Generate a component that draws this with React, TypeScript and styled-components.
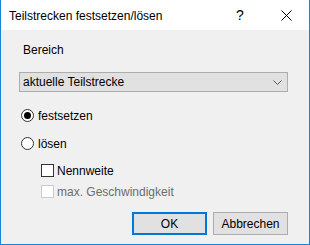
import React, { useState } from 'react';
import styled, { createGlobalStyle } from 'styled-components';

const GlobalStyle = createGlobalStyle`
  html, body {
    margin: 0;
    padding: 0;
    background: #ffffff;
  }
  body {
    font-family: 'Liberation Sans', Arial, sans-serif;
    font-size: 12px;
  }
`;

// DIALOG
const App: React.FC = () => {
  const [mode, setMode] = useState<'set' | 'release'>('set');
  const [diameter, setDiameter] = useState<boolean>(false);

  return (
    <>
      <GlobalStyle />
      <Window>
        <TitleBar>
          <Title>Teilstrecken festsetzen/lösen</Title>
          <HelpButton>?</HelpButton>
          <CloseButton>
            <svg width='11' height='11' viewBox='0 0 11 11'>
              <path d='M0.5 0.5 L10.5 10.5 M10.5 0.5 L0.5 10.5' stroke='#000' strokeWidth='1' />
            </svg>
          </CloseButton>
        </TitleBar>
        <Body>
          <Label>Bereich</Label>
          <Combo>
            <span>aktuelle Teilstrecke</span>
            <svg width='9' height='5' viewBox='0 0 9 5'>
              <path d='M0.5 0.5 L4.5 4.5 L8.5 0.5' stroke='#5a5a5a' strokeWidth='1' fill='none' />
            </svg>
          </Combo>
          <RadioRow $first onClick={() => setMode('set')}>
            <RadioCircle $checked={mode === 'set'} />
            <span>festsetzen</span>
          </RadioRow>
          <RadioRow onClick={() => setMode('release')}>
            <RadioCircle $checked={mode === 'release'} />
            <span>lösen</span>
          </RadioRow>
          <CheckRow $first onClick={() => setDiameter(!diameter)}>
            <CheckBox $checked={diameter}>{diameter ? '✓' : ''}</CheckBox>
            <span>Nennweite</span>
          </CheckRow>
          <CheckRow $disabled>
            <CheckBox $disabled />
            <span>max. Geschwindigkeit</span>
          </CheckRow>
          <ButtonRow>
            <DialogButton $default>OK</DialogButton>
            <DialogButton>Abbrechen</DialogButton>
          </ButtonRow>
        </Body>
      </Window>
    </>
  );
};

// STYLED COMPONENTS
const Window = styled.div`
  width: 310px;
  height: 245px;
  box-sizing: border-box;
  border: 1px solid #1883d7;
  border-top: none;
  display: flex;
  flex-direction: column;
  background: #f0f0f0;
  color: #000000;
`;

const TitleBar = styled.div`
  height: 30px;
  background: #ffffff;
  display: flex;
  align-items: center;
  padding-left: 8px;
`;

const Title = styled.div`
  flex: 1;
  font-size: 12px;
  padding-top: 1px;
`;

const HelpButton = styled.div`
  width: 46px;
  text-align: center;
  font-size: 14px;
`;

const CloseButton = styled.div`
  width: 46px;
  height: 30px;
  display: flex;
  align-items: center;
  justify-content: center;
  padding-top: 1px;
  box-sizing: border-box;
`;

const Body = styled.div`
  flex: 1;
  display: flex;
  flex-direction: column;
  padding: 13px 21px 0 18px;
`;

const Label = styled.div`
  line-height: 15px;
  padding-left: 4px;
  margin-bottom: 14px;
`;

const Combo = styled.div`
  height: 20px;
  box-sizing: border-box;
  border: 1px solid #adadad;
  background: #e1e1e1;
  display: flex;
  align-items: center;
  justify-content: space-between;
  padding: 0 5px 0 3px;
`;

const RadioRow = styled.div<{ $first?: boolean }>`
  display: flex;
  align-items: center;
  gap: 4px;
  height: 17px;
  margin-top: ${(p) => (p.$first ? '15px' : '11px')};
  padding-left: 2px;
`;

const RadioCircle = styled.div<{ $checked: boolean }>`
  width: 13px;
  height: 13px;
  box-sizing: border-box;
  border: 1px solid #333333;
  border-radius: 50%;
  background: #ffffff;
  display: flex;
  align-items: center;
  justify-content: center;
  &::after {
    content: '';
    width: 7px;
    height: 7px;
    border-radius: 50%;
    background: #000000;
    display: ${(p) => (p.$checked ? 'block' : 'none')};
  }
`;

const CheckRow = styled.div<{ $first?: boolean; $disabled?: boolean }>`
  display: flex;
  align-items: center;
  gap: 3px;
  height: 17px;
  margin-top: ${(p) => (p.$first ? '10px' : '4px')};
  padding-left: 22px;
  color: ${(p) => (p.$disabled ? '#6d6d6d' : '#000000')};
`;

const CheckBox = styled.div<{ $checked?: boolean; $disabled?: boolean }>`
  width: 13px;
  height: 13px;
  box-sizing: border-box;
  border: 1px solid ${(p) => (p.$disabled ? '#cccccc' : '#333333')};
  background: #ffffff;
  font-size: 10px;
  line-height: 11px;
  text-align: center;
`;

const ButtonRow = styled.div`
  display: flex;
  justify-content: flex-end;
  gap: 6px;
  margin-top: 12px;
`;

const DialogButton = styled.button<{ $default?: boolean }>`
  width: 75px;
  height: 23px;
  box-sizing: border-box;
  background: #e1e1e1;
  border: ${(p) => (p.$default ? '2px solid #0078d7' : '1px solid #adadad')};
  font-family: 'Liberation Sans', Arial, sans-serif;
  font-size: 12px;
  color: #000000;
  padding: 0;
`;

export default App;
